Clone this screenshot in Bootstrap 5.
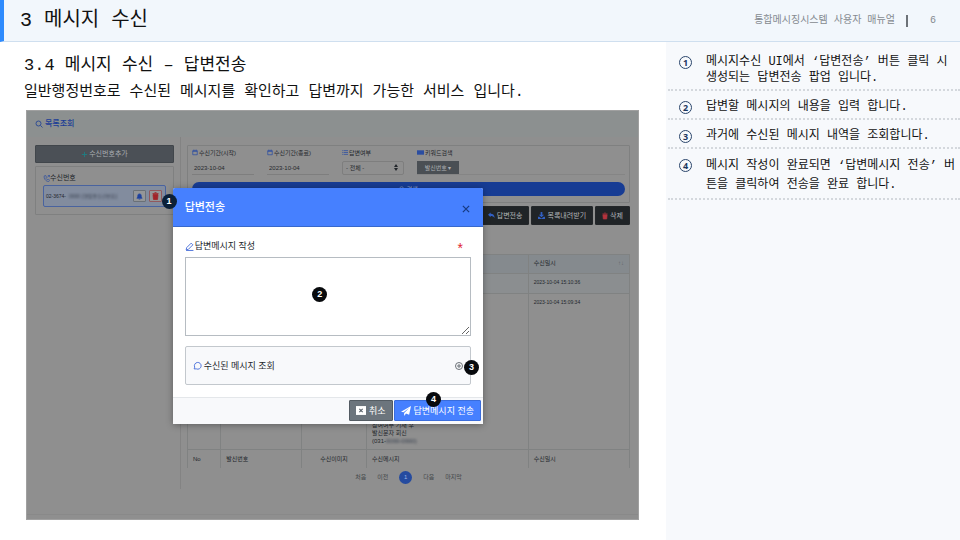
<!DOCTYPE html>
<html lang="ko">
<head>
<meta charset="utf-8">
<meta name="viewport" content="width=device-width, initial-scale=1">
<title>메시지 수신 - 답변전송</title>
<link href="https://cdn.jsdelivr.net/npm/bootstrap@5.3.0/dist/css/bootstrap.min.css" rel="stylesheet">
<style>
body{font-family:"Liberation Mono","Noto Sans CJK KR",monospace;color:#111;background:#fff}
svg{fill:none;stroke:currentColor;stroke-width:1.6;flex:none}
button,input,select,textarea{font-family:inherit}
.topbar{height:42px;background:#f2f7fc;border-left:4px solid #2f8bfd;border-bottom:1px solid #cfdfef;padding:0 24px 0 16px}
.topbar h1{font-size:20px;line-height:24px;margin:0;font-weight:400}
.manual{font-size:10px;color:#858a90}
.manual i{width:2px;height:12px;background:#6d7278;margin:0 22px 0 11px}
.page-body{min-height:calc(100vh - 42px)}
.lead-col{padding:13px 27px 20px 26px}
.lead-col h2{font-size:17px;line-height:22px;margin:0 0 0 -2px;font-weight:400}
.lead-col .desc{font-size:15px;line-height:24px;margin:4px 0 5px -2px;white-space:nowrap}
.notes{flex:0 0 294px;background:#f7f9fc;padding:4px 0 0 2px;font-size:12px}
.note{border-bottom:2px dotted #d4d8dd;padding:8px 2px 3px 11px;line-height:16px;gap:14px}
.note.roomy{line-height:19px}
.ring{flex:none;width:13px;height:13px;margin-top:2px;border:1px solid #2a456b;border-radius:50%;font:700 9px/11px "Noto Sans",sans-serif;text-align:center;color:#1c375f}
.note p{margin:0}
.app{font-family:"Liberation Sans","Noto Sans CJK KR",sans-serif;background:#8f8f8f;border:1px solid #a0a0a0;font-size:6px;line-height:8px;color:#22262b}
.app-title{height:26px;background:#8c9090;color:#1b3d96;font-size:8px;font-weight:500;padding-left:8px;gap:2px}
.app-cols{height:352px}
.side{flex:0 0 154px;border-right:1px solid #838383;padding:8px 6px 0 8px}
.box{border:1px solid #7f8080;border-radius:1px}
.add{width:100%;height:18px;background:#4b5056;border:1px solid #41464b;border-radius:1px;color:#a9adb1;font-size:7px;line-height:8px;gap:1px}
.add svg{color:#1d7f83}
.numbers{margin-top:3px;height:49px;padding:7px}
.numbers .head{font-size:7px}
.entry{height:22px;border:1px solid #49639f;border-radius:2px;background:#828c9e;padding:0 3px 0 2px;margin-top:3px;font-size:5px;gap:3px}
.smear{filter:blur(1px);color:#353d4c;white-space:nowrap}
.mini{width:13px;height:12px;border:1px solid #6a7077;background:#949698;border-radius:1px;color:#1e429f;padding:0}
.del{color:#a12329;border-color:#91595d}
.main-col{padding:8px 8px 0 6px;min-width:0}
.filter{height:58px;padding:3px 4px 0}
.filter label{gap:1px;height:8px;white-space:nowrap}
.ico{color:#2b4da1}
.field{width:75px}
.field input,.field select{width:62px;height:14px;margin-top:4px;border:0;border-bottom:1px solid #7e7e7e;background:transparent;color:#26292d;font-size:6px;padding:0 2px;border-radius:0}
.field select{border:1px solid #7e7e7e;border-radius:2px;appearance:none;width:62px;padding-left:3px}
.pick{position:relative}
.pick svg{position:absolute;right:6px;bottom:0}
.key{height:13px;width:42px;margin-top:4px;background:#4a4f54;border:0;color:#adb0b3;font-size:6px;padding:0}
.key-line{border-bottom:1px solid #858585}
.searching{height:14px;width:100%;border:0;border-radius:7px;background:#173c94;color:#8f9fc8;font-size:6px;margin-top:7px;line-height:12px}
.acts{gap:2px;margin:3px 0 29px}
.acts button{height:19px;border:1px solid #24272a;background:#202427;color:#b1b4b7;border-radius:1px;font-size:7px;padding:0 6px;gap:2px;white-space:nowrap}
.acts .ico{color:#315fc3}
.acts .ico-red{color:#b3343d}
.log{width:100%;table-layout:fixed;font-size:6px;line-height:8px}
.log th,.log td{border:1px solid #808282;padding:4px 5px;font-weight:400;vertical-align:top}
.log thead th{height:19px;background:#858a8e}
.arrows{color:#62676b}
.log tbody td{font-size:5px;border-top-color:#7b7f81}
.log tbody tr:first-child{height:20px}
.log tbody tr:first-child td{background:#8b8e90}
.log tbody tr:last-child{height:156px}
.log tbody tr:last-child td{background:#8f8f8f}
.log tbody .msg{vertical-align:bottom;font-size:6px}
.log tfoot td{height:18px;border-bottom:0;padding-top:5px}
.pages{gap:11px;margin-top:3px;color:#44474a}
.pages a{color:inherit;text-decoration:none}
.pages a.now{width:13px;height:13px;border-radius:50%;background:#254b9f;color:#9bb2e6;line-height:13px;text-align:center}
.app-foot{height:30px;padding-top:25px}
.app-foot div{border-top:1px solid #898989}
.reply{position:absolute;left:24%;top:77px;width:50.8%;margin-left:-1px;background:#fff;border-radius:2px;box-shadow:0 1px 7px rgba(0,0,0,.35);color:#22262b}
.reply-head{height:39px;background:#4680ff;border-bottom:1px solid #3768cc;color:#fff;padding:0 12px;border-radius:2px 2px 0 0}
.reply-head h3{font-size:11px;font-weight:500;line-height:16px;margin:0}
.close-x{border:0;background:none;color:#173a83;padding:3px 0 0}
.reply-main{padding:13px 12px 12px}
.reply-main .cap{height:12px}
.reply-main label{font-size:9px;line-height:12px;gap:1px}
.reply-main textarea{display:block;width:100%;height:79px;border:1px solid #b6bcc2;background:#fff;margin-top:5px;resize:vertical;font-size:9px}
.star{color:#e02531;font-size:14px;line-height:12px;padding:2px 8px 0 0}
.past{width:100%;height:39px;background:#f8f9fb;border:1px solid #c3c8cd;border-radius:2px;margin-top:10px;padding:0 7px;font-size:9px;color:#22262b}
.past span{gap:2px}
.reply-main svg{color:#4169d8}
.reply-main .plus{color:#6b7076}
.reply-foot{height:27px;border-top:1px solid #e4e7ea;background:#f8f9fb;padding:2px 2px 3px;gap:1px}
.reply-foot button{height:21px;border:1px solid #535b62;border-radius:1px;background:#6c757d;color:#fff;font-size:9px;gap:3px;padding:0 6px}
.reply-foot .send{background:#4680ff;border-color:#3a6cdb}
.dot{position:absolute;width:15px;height:15px;border-radius:50%;background:#080a0d;color:#fff;font:700 9px/15px "Liberation Sans",sans-serif;text-align:center}
.dot1{left:-11px;top:6px;background:#0b2038}
.dot2{left:45%;top:99px}
.dot3{right:4px;top:172px}
.dot4{right:42px;top:204px}
</style>
<script src="https://cdn.jsdelivr.net/npm/bootstrap@5.3.0/dist/js/bootstrap.bundle.min.js"></script>
</head>
<body>
<header class="topbar d-flex align-items-center justify-content-between">
  <h1>3 메시지 수신</h1>
  <div class="manual d-flex align-items-center"><span>통합메시징시스템 사용자 매뉴얼</span><i></i><span>6</span></div>
</header>
<div class="page-body d-flex">
  <main class="lead-col flex-grow-1">
    <h2>3.4 메시지 수신 – 답변전송</h2>
    <p class="desc">일반행정번호로 수신된 메시지를 확인하고 답변까지 가능한 서비스 입니다.</p>
    <section class="app position-relative">
      <div class="app-title d-flex align-items-center">
        <svg width="8" height="8" viewBox="0 0 16 16"><circle cx="7" cy="7" r="5"/><path d="M11 11l4 4"/></svg><span>목록조회</span>
      </div>
      <div class="app-cols d-flex">
        <aside class="side">
          <button class="add d-flex align-items-center justify-content-center" type="button"><svg width="7" height="7" viewBox="0 0 16 16"><path stroke-width="2" d="M8 2v12M2 8h12"/></svg>수신번호추가</button>
          <div class="box numbers">
            <div class="head d-flex align-items-center"><svg class="ico" width="7" height="7" viewBox="0 0 16 16"><path d="M3 2l3-1 2 4-2 2 4 4 2-2 3 3-2 3C7 15 1 8 3 2zM10 5l5-4M11 1h4v4"/></svg>수신번호</div>
            <div class="entry d-flex align-items-center">
              <span>02-3674-</span><span class="smear flex-grow-1 overflow-hidden">0000 (행정용수신번호)</span>
              <button class="mini d-flex align-items-center justify-content-center" type="button" aria-label="알림"><svg width="7" height="7" viewBox="0 0 16 16"><path fill="currentColor" d="M2 12l2-3V6a4 4 0 018 0v3l2 3zM6 14h4"/></svg></button>
              <button class="mini del d-flex align-items-center justify-content-center" type="button" aria-label="삭제"><svg width="7" height="8" viewBox="0 0 14 16"><path fill="currentColor" d="M2 5h10l-1 10H3z"/><path d="M1 3h12M5 1h4"/></svg></button>
            </div>
          </div>
        </aside>
        <div class="main-col flex-grow-1">
          <div class="box filter">
            <div class="d-flex">
              <div class="field"><label class="d-flex" for="from"><svg class="ico" width="6" height="7" viewBox="0 0 16 16"><path stroke-width="2" d="M2 3h12v11H2zM2 5h12M5 0v3M11 0v3"/></svg>수신기간(시작)</label><input id="from" value="2023-10-04"></div>
              <div class="field"><label class="d-flex" for="to"><svg class="ico" width="6" height="7" viewBox="0 0 16 16"><path stroke-width="2" d="M2 3h12v11H2zM2 5h12M5 0v3M11 0v3"/></svg>수신기간(종료)</label><input id="to" value="2023-10-04"></div>
              <div class="field"><label class="d-flex" for="done"><svg class="ico" width="6" height="7" viewBox="0 0 16 16"><path stroke-width="2" d="M0 3h2M4 3h12M0 8h2M4 8h12M0 13h2M4 13h12"/></svg>답변여부</label><span class="pick"><select id="done"><option>- 전체 -</option></select><svg width="4" height="7" viewBox="0 0 8 14"><path fill="currentColor" stroke="none" d="M4 0l4 6H0zM4 14l4-6H0z"/></svg></span></div>
              <div class="flex-grow-1"><label class="d-flex" for="kind"><svg class="ico" width="7" height="7" viewBox="0 0 16 16"><path fill="currentColor" stroke="none" d="M0 3h16v10H0z"/></svg>키워드검색</label><div class="key-line"><button class="key d-block" id="kind" type="button">발신번호 ▾</button></div></div>
            </div>
            <button class="searching" type="button"><svg width="6" height="6" viewBox="0 0 16 16"><circle cx="7" cy="7" r="5"/><path d="M11 11l4 4"/></svg> 검색</button>
          </div>
          <div class="acts d-flex justify-content-end">
            <button class="d-flex align-items-center" type="button"><svg class="ico" width="7" height="7" viewBox="0 0 16 16"><path fill="currentColor" stroke="none" d="M0 6l6-5v3c6 0 9 3 9 10-2-4-5-5-9-5v3z"/></svg>답변전송</button>
            <button class="d-flex align-items-center" type="button"><svg class="ico" width="7" height="7" viewBox="0 0 16 16"><path fill="currentColor" stroke="none" d="M6 0h4v6h4l-6 6-6-6h4zM0 11h3l5 4 5-4h3v5H0z"/></svg>목록내려받기</button>
            <button class="d-flex align-items-center" type="button"><svg class="ico-red" width="6" height="8" viewBox="0 0 14 16"><path fill="currentColor" d="M2 5h10l-1 10H3z"/><path d="M1 3h12M5 1h4"/></svg>삭제</button>
          </div>
          <table class="log">
            <colgroup><col style="width:7.5%"><col style="width:18.3%"><col style="width:14.7%"><col style="width:36.6%"><col></colgroup>
            <thead><tr><th>No</th><th>발신번호</th><th>수신이미지</th><th>수신메시지</th><th><div class="d-flex justify-content-between">수신일시<span class="arrows">↑↓</span></div></th></tr></thead>
            <tbody>
              <tr><td></td><td></td><td></td><td></td><td>2023-10-04 15:10:36</td></tr>
              <tr><td></td><td></td><td></td><td class="msg">참여여부 기재 후<br>발신문자 회신<br>(031-<span class="smear">0000-0000)</span></td><td>2023-10-04 15:09:34</td></tr>
            </tbody>
            <tfoot><tr><td>No</td><td>발신번호</td><td class="text-center">수신이미지</td><td>수신메시지</td><td>수신일시</td></tr></tfoot>
          </table>
          <nav class="pages d-flex justify-content-center align-items-center"><a href="#">처음</a><a href="#">이전</a><a class="now" href="#">1</a><a href="#">다음</a><a href="#">마지막</a></nav>
        </div>
      </div>
      <div class="app-foot"><div></div></div>

      <div class="reply" role="dialog" aria-label="답변전송">
        <div class="reply-head d-flex align-items-center justify-content-between">
          <h3>답변전송</h3>
          <button class="close-x d-flex" type="button" aria-label="닫기"><svg width="10" height="10" viewBox="0 0 16 16"><path stroke-width="2" d="M3 3l10 10M13 3L3 13"/></svg></button>
        </div>
        <div class="reply-main">
          <div class="cap d-flex justify-content-between">
            <label class="d-flex align-items-center" for="msg"><svg width="9" height="9" viewBox="0 0 16 16"><path d="M3 10l8-8 3 3-8 8-4 1zM2 15h13"/></svg>답변메시지 작성</label><span class="star">*</span>
          </div>
          <textarea id="msg"></textarea>
          <button class="past d-flex align-items-center justify-content-between" type="button">
            <span class="d-flex align-items-center"><svg width="9" height="9" viewBox="0 0 16 16"><path d="M2 14l1-3a6 6 0 113 3z"/></svg>수신된 메시지 조회</span>
            <svg class="plus" width="8" height="8" viewBox="0 0 16 16"><circle cx="8" cy="8" r="7" stroke-width="2"/><path stroke-width="2" d="M8 4v8M4 8h8"/></svg>
          </button>
        </div>
        <div class="reply-foot d-flex justify-content-end">
          <button class="d-flex align-items-center" type="button"><svg width="10" height="9" viewBox="0 0 18 16"><path fill="currentColor" stroke="none" d="M0 0h18v16H0z"/><path stroke="#59626a" stroke-width="2" d="M6 5l6 6M12 5l-6 6"/></svg>취소</button>
          <button class="send d-flex align-items-center" type="button"><svg width="10" height="10" viewBox="0 0 16 16"><path fill="currentColor" stroke="none" d="M0 9L16 0l-3 14-5-2-3 4v-5l8-8-9 7z"/></svg>답변메시지 전송</button>
        </div>
        <span class="dot dot1">1</span><span class="dot dot2">2</span><span class="dot dot3">3</span><span class="dot dot4">4</span>
      </div>
    </section>
  </main>
  <aside class="notes">
    <div class="note d-flex"><span class="ring">1</span><p>메시지수신 UI에서 ‘답변전송’ 버튼 클릭 시 생성되는 답변전송 팝업 입니다.</p></div>
    <div class="note d-flex"><span class="ring">2</span><p>답변할 메시지의 내용을 입력 합니다.</p></div>
    <div class="note d-flex"><span class="ring">3</span><p>과거에 수신된 메시지 내역을 조회합니다.</p></div>
    <div class="note roomy d-flex"><span class="ring">4</span><p>메시지 작성이 완료되면 ‘답변메시지 전송’ 버튼을 클릭하여 전송을 완료 합니다.</p></div>
  </aside>
</div>
</body>
</html>
